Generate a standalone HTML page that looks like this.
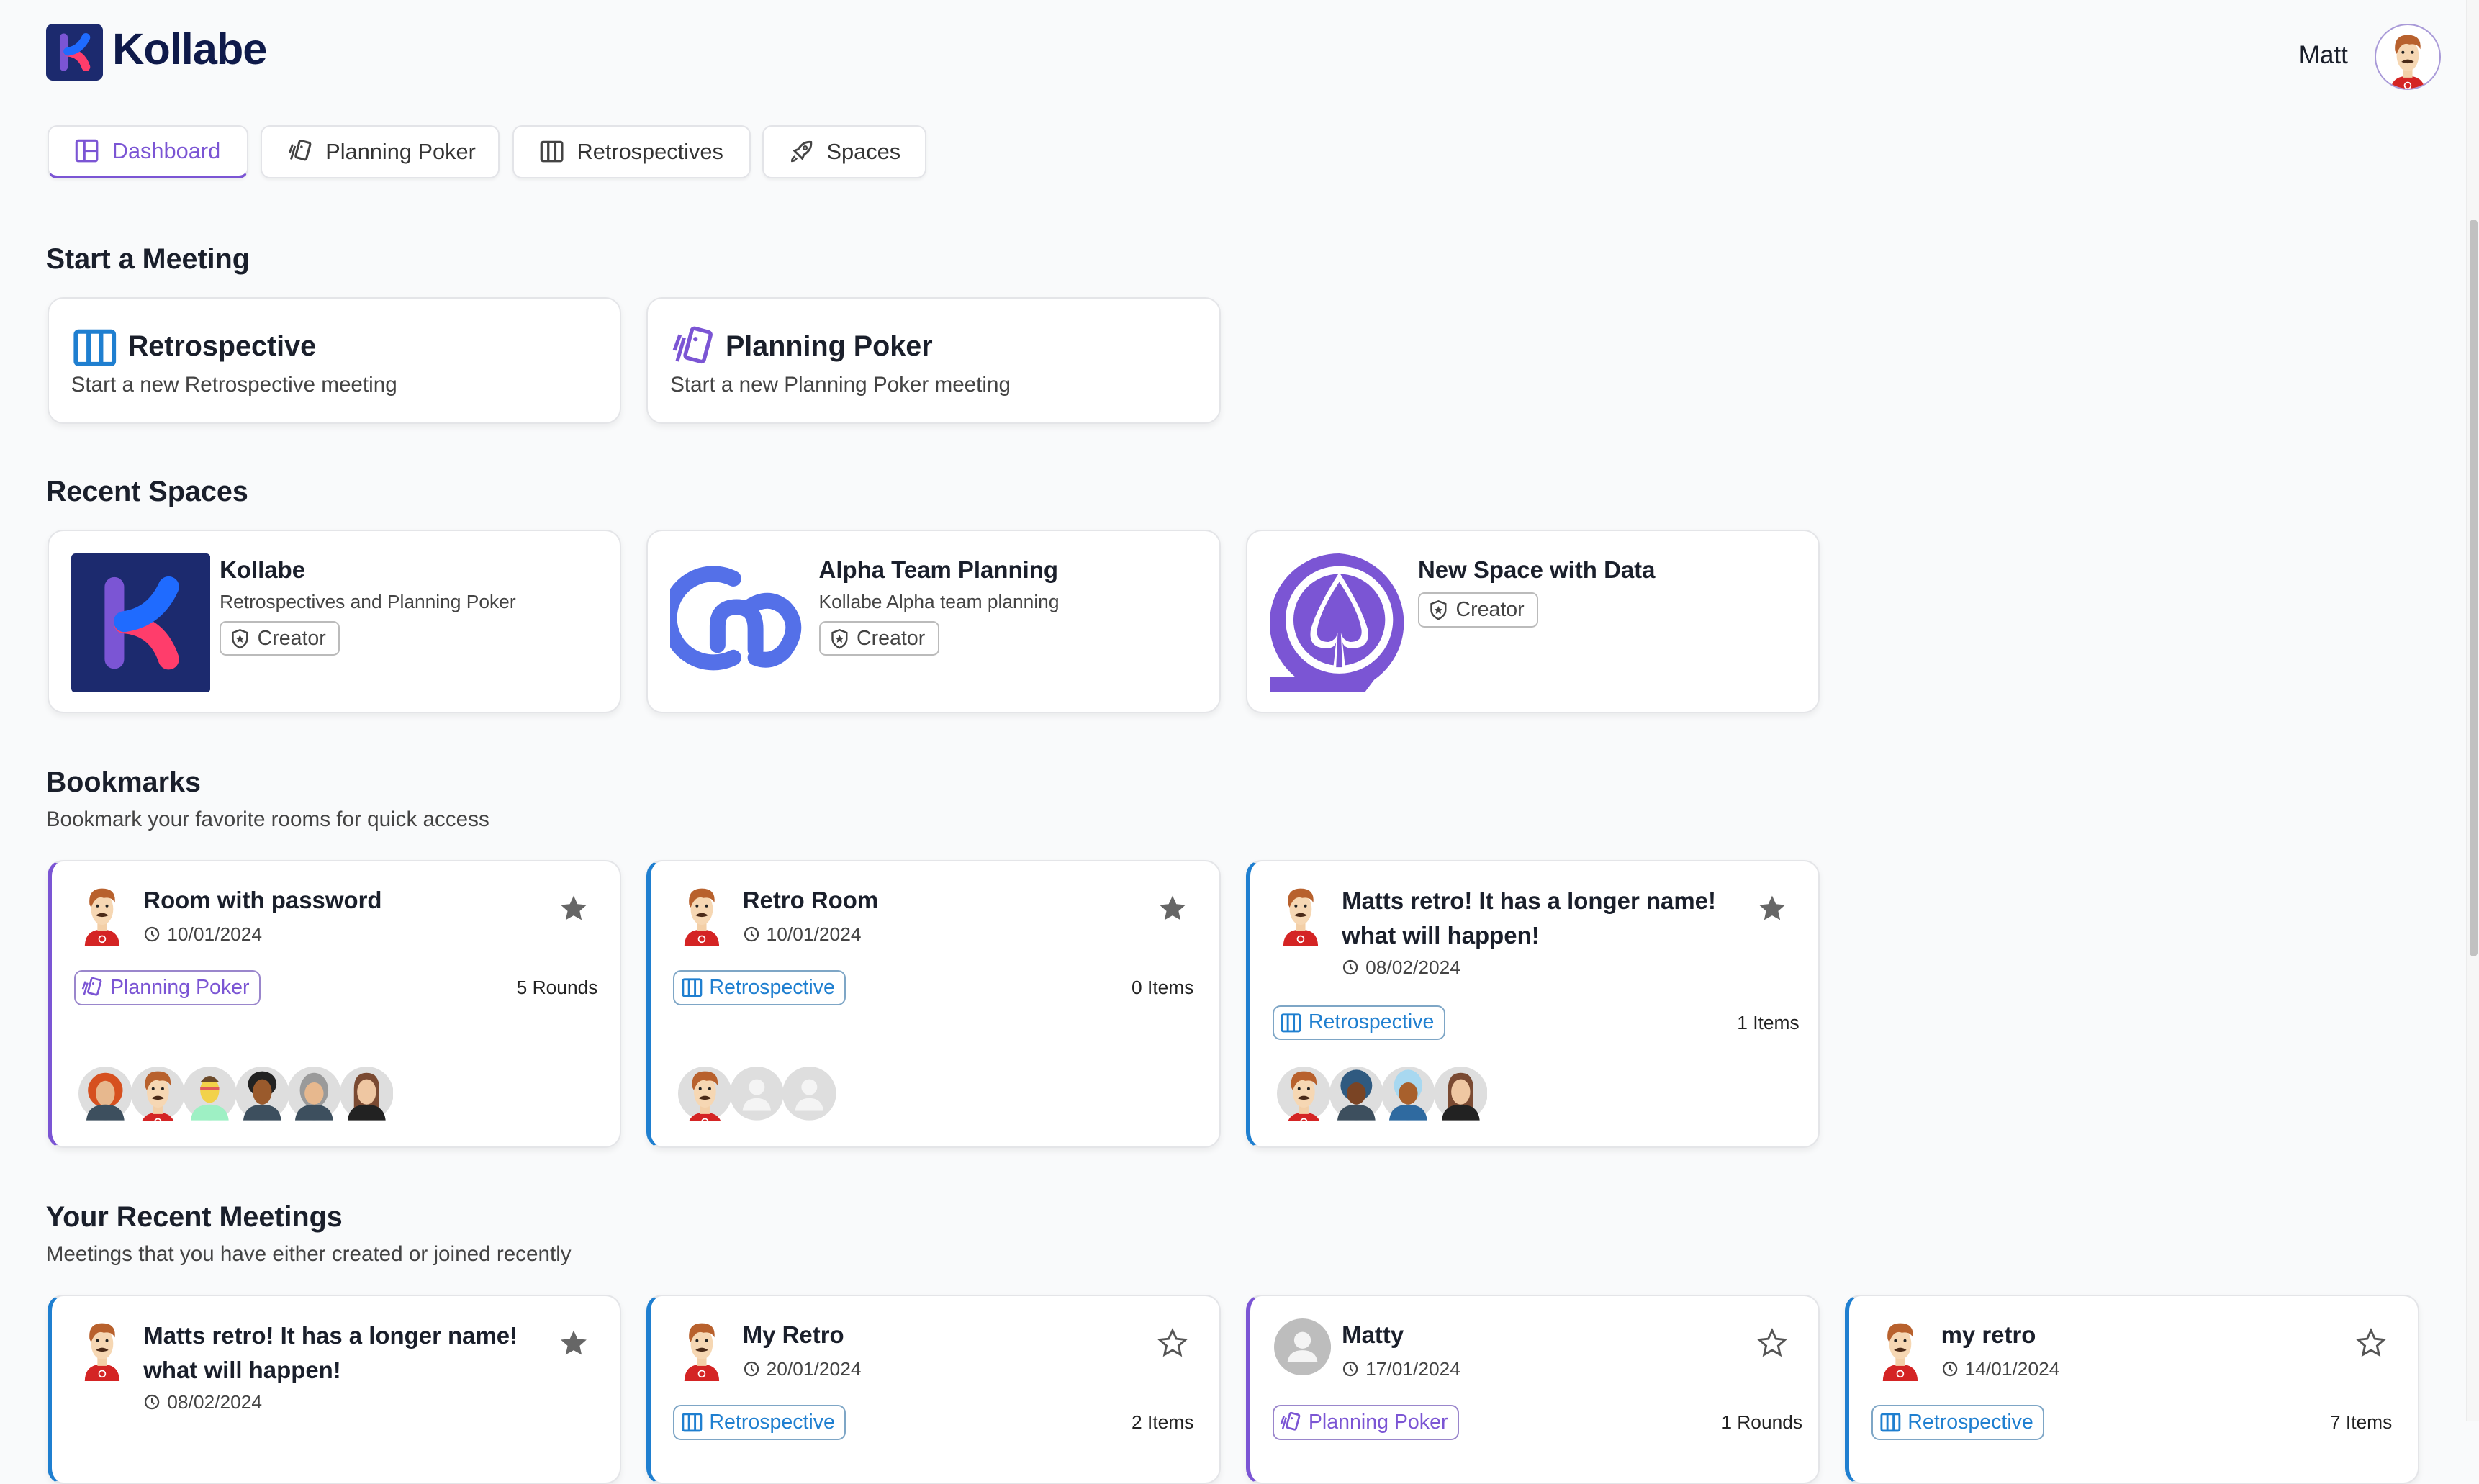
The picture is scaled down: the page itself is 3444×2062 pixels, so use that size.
<!DOCTYPE html>
<html><head><meta charset="utf-8">
<style>
html,body{margin:0;padding:0}
body{width:1568px;height:899px;overflow:hidden;background:#f9fafb;font-family:"Liberation Sans",sans-serif;color:#1a1f2b;zoom:2.19643;position:relative}
.a{position:absolute}
.tab{position:absolute;top:79px;height:34px;border:1px solid #e3e4e8;border-radius:6px;background:#fff;box-sizing:border-box;display:flex;align-items:center;font-size:14px;color:#333;box-shadow:0 1px 2px rgba(0,0,0,.05)}
.tab svg{margin:0 8px 0 16px}
h2{position:absolute;margin:0;font-size:18px;font-weight:bold;color:#1a1f2b;left:29px}
.sub{position:absolute;left:29px;font-size:13.5px;color:#444}
.card{position:absolute;background:#fff;border:1px solid #e4e5e8;border-radius:10px;box-sizing:border-box;box-shadow:0 2px 4px rgba(0,0,0,.06);overflow:hidden}
.t{position:absolute;font-weight:bold;font-size:15px;color:#1a1f2b}
.s{position:absolute;font-size:12px;color:#444}
.badge{position:absolute;height:22px;border:1px solid #bbb;border-radius:4px;box-sizing:border-box;display:flex;align-items:center;font-size:13px;color:#444;padding:0 8px 0 5px}
.badge svg{margin-right:4px}
.card.bk{border-left-width:3px;border-left-style:solid}
.card.pp{border-left-color:#7b55d4}.card.rt{border-left-color:#1f7fd0}
.tag{position:absolute;height:22px;border:1px solid;border-radius:5px;box-sizing:border-box;display:flex;align-items:center;font-size:13px;padding:0 6px 0 4px}
.tag svg{margin-right:4px}
.tp{color:#7b55d4;border-color:#9a86cc}.tr{color:#1f7fd0;border-color:#7ea6c6}
.date{position:absolute;font-size:12px;color:#444;display:flex;align-items:center}
.date svg{margin-right:4px}
.cnt{position:absolute;font-size:12px;color:#222}
.star{position:absolute}
.av{position:absolute;width:34px;height:34px}
</style></head><body>
<svg width="0" height="0" style="position:absolute">
<defs>
<symbol id="matt" viewBox="0 0 30 40">
<path d="M4 40 Q4 29 15 29 Q26 29 26 40Z" fill="#d42424"/>
<rect x="12" y="24" width="6" height="6" fill="#f3cfa7"/>
<ellipse cx="15" cy="16" rx="7" ry="10" fill="#f6d7b3"/>
<path d="M7 13 Q6 3 15 3 Q24 3 23 12 Q21 8 16 9 Q11 7 8 15Z" fill="#b8612d"/>
<path d="M11 20 Q15 17 19 20 Q15 22 11 20Z" fill="#4a2a18"/>
<circle cx="12" cy="14" r="0.9" fill="#222"/><circle cx="18" cy="14" r="0.9" fill="#222"/>
<circle cx="15" cy="35" r="2" fill="none" stroke="#fff" stroke-width="0.8"/>
</symbol>
<symbol id="st" viewBox="0 0 24 24"><path d="M12 2l2.9 6.3 6.9.7-5.2 4.6 1.5 6.8L12 17l-6.1 3.4 1.5-6.8L2.2 9l6.9-.7z"/></symbol>
<symbol id="clk" viewBox="0 0 12 12"><circle cx="6" cy="6" r="4.5" fill="none" stroke="#444" stroke-width="1.1"/><path d="M6 3.5V6l1.6 1.4" fill="none" stroke="#444" stroke-width="1.1"/></symbol>
<symbol id="retro" viewBox="0 0 16 16"><rect x="1.5" y="2" width="13" height="12" rx="1" fill="none" stroke="currentColor" stroke-width="1.5"/><path d="M5.8 2v12M10.2 2v12" stroke="currentColor" stroke-width="1.5"/></symbol>
<symbol id="poker" viewBox="0 0 16 16"><rect x="6" y="1.5" width="7" height="11" rx="1" transform="rotate(15 9 7)" fill="none" stroke="currentColor" stroke-width="1.4"/><path d="M4.5 4.5L2 13M3 3.5L1 9" stroke="currentColor" stroke-width="1.3" fill="none"/><circle cx="8.6" cy="5" r=".8" fill="currentColor"/></symbol>
<symbol id="shield" viewBox="0 0 14 14"><path d="M7 1.5L11.5 3.2V7Q11.5 10.8 7 12.8Q2.5 10.8 2.5 7V3.2Z" fill="none" stroke="#444" stroke-width="1.1"/><path d="M7 4.6l.8 1.7 1.8.2-1.3 1.2.4 1.8L7 8.6l-1.7.9.4-1.8-1.3-1.2 1.8-.2z" fill="#444"/></symbol>
</defs></svg>

<!-- header -->
<svg class="a" style="left:29px;top:15px" width="36" height="36" viewBox="0 0 100 100"><rect width="100" height="100" rx="12" fill="#1c2a6e"/><path d="M31 24V76" stroke="#7b55d4" stroke-width="14" stroke-linecap="round"/><path d="M38 50Q62 52 70 76" stroke="#ff3d6b" stroke-width="15" fill="none" stroke-linecap="round"/><path d="M38 49Q60 46 70 24" stroke="#1f6bff" stroke-width="15" fill="none" stroke-linecap="round"/></svg>
<div class="a" style="left:71px;top:15px;font-size:28px;font-weight:bold;color:#0f1a4a;letter-spacing:-.5px">Kollabe</div>
<div class="a" style="left:1454px;top:26px;font-size:16px;color:#1a1f2b">Matt</div>
<div class="a" style="left:1502px;top:15px;width:40px;height:40px;border-radius:50%;border:1px solid #a99ad8;background:#fff;overflow:hidden"><svg width="30" height="40" style="margin-left:5px;margin-top:3px"><use href="#matt"/></svg></div>

<!-- tabs -->
<div class="tab" style="left:30px;width:127px;color:#7b55d4;border-bottom:2px solid #7b55d4"><svg width="16" height="16" viewBox="0 0 16 16"><rect x="1.5" y="1.5" width="13" height="13" rx="1" fill="none" stroke="#7b55d4" stroke-width="1.4"/><path d="M6.5 1.5v13M6.5 8h8" stroke="#7b55d4" stroke-width="1.4"/></svg>Dashboard</div>
<div class="tab" style="left:165px;width:151px"><svg width="16" height="16" style="color:#444"><use href="#poker"/></svg>Planning Poker</div>
<div class="tab" style="left:324px;width:151px"><svg width="16" height="16" style="color:#444"><use href="#retro"/></svg>Retrospectives</div>
<div class="tab" style="left:482px;width:104px"><svg width="16" height="16" viewBox="0 0 16 16"><path d="M6 10L3.5 7.5 6 6.5Q9 1.5 14 2Q14.5 7 9.5 10L8.5 12.5Z" fill="none" stroke="#444" stroke-width="1.3"/><circle cx="10.3" cy="5.7" r="1.1" fill="none" stroke="#444"/><path d="M4 11Q2 12 2 14Q4 14 5 12" fill="none" stroke="#444" stroke-width="1.2"/></svg>Spaces</div>

<!-- start meeting -->
<h2 style="top:154px">Start a Meeting</h2>
<div class="card" style="left:30px;top:188px;width:363px;height:80px">
<svg class="a" style="left:15px;top:19px;color:#1f7fd0" width="28" height="24" viewBox="0 0 16 14"><rect x="1" y="1" width="14" height="12" rx="1" fill="none" stroke="currentColor" stroke-width="1.6"/><path d="M5.7 1v12M10.3 1v12" stroke="currentColor" stroke-width="1.6"/></svg>
<div class="a" style="left:50px;top:20px;font-size:18px;font-weight:bold">Retrospective</div>
<div class="a" style="left:14px;top:47px;font-size:13.5px;color:#444">Start a new Retrospective meeting</div></div>
<div class="card" style="left:409px;top:188px;width:363px;height:80px">
<svg class="a" style="left:14px;top:17px;color:#7b55d4" width="30" height="28"><use href="#poker"/></svg>
<div class="a" style="left:49px;top:20px;font-size:18px;font-weight:bold">Planning Poker</div>
<div class="a" style="left:14px;top:47px;font-size:13.5px;color:#444">Start a new Planning Poker meeting</div></div>

<!-- recent spaces -->
<h2 style="top:301px">Recent Spaces</h2>
<div class="card" style="left:30px;top:335px;width:363px;height:116px">
<svg class="a" style="left:14px;top:14px" width="88" height="88" viewBox="0 0 100 100"><rect width="100" height="100" rx="3" fill="#1c2a6e"/><path d="M31 24V76" stroke="#7b55d4" stroke-width="14" stroke-linecap="round"/><path d="M38 50Q62 52 70 76" stroke="#ff3d6b" stroke-width="15" fill="none" stroke-linecap="round"/><path d="M38 49Q60 46 70 24" stroke="#1f6bff" stroke-width="15" fill="none" stroke-linecap="round"/></svg>
<div class="t" style="left:108px;top:16px">Kollabe</div><div class="s" style="left:108px;top:38px">Retrospectives and Planning Poker</div>
<div class="badge" style="left:108px;top:57px"><svg width="14" height="14"><use href="#shield"/></svg>Creator</div></div>
<div class="card" style="left:409px;top:335px;width:363px;height:116px">
<svg class="a" style="left:14px;top:20px" width="90" height="72" viewBox="0 0 90 72"><path d="M40 10A28 28 0 1 0 40 60" fill="none" stroke="#5470e8" stroke-width="10" stroke-linecap="round"/><path d="M30 52V40Q30 28 42 28Q54 28 54 42V55" fill="none" stroke="#5470e8" stroke-width="10" stroke-linecap="round"/><path d="M50 28Q62 20 72 28Q84 40 72 56Q64 64 54 60" fill="none" stroke="#5470e8" stroke-width="10" stroke-linecap="round"/></svg>
<div class="t" style="left:108px;top:16px">Alpha Team Planning</div><div class="s" style="left:108px;top:38px">Kollabe Alpha team planning</div>
<div class="badge" style="left:108px;top:57px"><svg width="14" height="14"><use href="#shield"/></svg>Creator</div></div>
<div class="card" style="left:788px;top:335px;width:363px;height:116px">
<svg class="a" style="left:14px;top:14px" width="88" height="88" viewBox="0 0 88 88"><path d="M44 0A44 44 0 0 0 16 78H0V88H60L66 80A44 44 0 0 0 44 0Z" fill="#7b55d4"/><circle cx="44" cy="42" r="34" fill="#fff"/><circle cx="44" cy="42" r="29" fill="#7b55d4"/><path d="M44 12Q30 34 26 48Q24 60 36 60Q41 60 42 56L40 74H48L46 56Q47 60 52 60Q64 60 62 48Q58 34 44 12Z" fill="#fff"/><path d="M44 18Q32 36 30 48Q29 56 37 56Q42 55 43 50L42 72H46L45 50Q46 55 51 56Q59 56 58 48Q56 36 44 18Z" fill="#7b55d4"/></svg>
<div class="t" style="left:108px;top:16px">New Space with Data</div>
<div class="badge" style="left:108px;top:39px"><svg width="14" height="14"><use href="#shield"/></svg>Creator</div></div>

<!-- bookmarks -->
<h2 style="top:485px">Bookmarks</h2>
<div class="sub" style="top:511px">Bookmark your favorite rooms for quick access</div>

<div class="card bk pp" style="left:30px;top:544px;width:363px;height:182px">
<svg class="a" style="left:17px;top:14px" width="30" height="40"><use href="#matt"/></svg>
<div class="t" style="left:58px;top:16px">Room with password</div>
<div class="date" style="left:58px;top:39px"><svg width="11" height="11"><use href="#clk"/></svg>10/01/2024</div>
<svg class="star" style="left:320px;top:20px" width="20" height="20" fill="#666"><use href="#st"/></svg>
<div class="tag tp" style="left:14px;top:69px"><svg width="14" height="14"><use href="#poker"/></svg>Planning Poker</div>
<div class="cnt" style="left:294px;top:73px">5 Rounds</div>
<svg class="av" style="left:17px;top:130px" viewBox="0 0 34 34"><circle cx="17" cy="17" r="17" fill="#dedede"/><ellipse cx="17" cy="15" rx="11" ry="11" fill="#d6501f"/><ellipse cx="17" cy="17" rx="6" ry="8" fill="#e7b88e"/><path d="M5 34Q6 24 17 24Q28 24 29 34Z" fill="#3d4f5e"/></svg>
<svg class="av" style="left:50px;top:130px" viewBox="0 0 34 34"><circle cx="17" cy="17" r="17" fill="#dedede"/><svg x="2" y="0" width="30" height="40"><use href="#matt"/></svg></svg>
<svg class="av" style="left:83px;top:130px" viewBox="0 0 34 34"><circle cx="17" cy="17" r="17" fill="#dedede"/><path d="M5 34Q6 24 17 24Q28 24 29 34Z" fill="#9ef0c4"/><ellipse cx="17" cy="15" rx="6" ry="8" fill="#f2d24a"/><path d="M11 10Q17 2 23 10Z" fill="#6b4a2a"/><path d="M11 14h12" stroke="#e05a5a" stroke-width="2"/></svg>
<svg class="av" style="left:116px;top:130px" viewBox="0 0 34 34"><circle cx="17" cy="17" r="17" fill="#dedede"/><path d="M5 34Q6 24 17 24Q28 24 29 34Z" fill="#3d4f5e"/><ellipse cx="17" cy="11" rx="9" ry="8" fill="#222"/><ellipse cx="17" cy="16" rx="6" ry="8" fill="#9a5a2c"/></svg>
<svg class="av" style="left:149px;top:130px" viewBox="0 0 34 34"><circle cx="17" cy="17" r="17" fill="#dedede"/><ellipse cx="17" cy="15" rx="9" ry="11" fill="#9a9a9a"/><path d="M5 34Q6 24 17 24Q28 24 29 34Z" fill="#3d4f5e"/><ellipse cx="17" cy="17" rx="6" ry="7" fill="#e7b88e"/></svg>
<svg class="av" style="left:182px;top:130px" viewBox="0 0 34 34"><circle cx="17" cy="17" r="17" fill="#dedede"/><path d="M9 28V14Q9 4 17 4Q25 4 25 14V28Z" fill="#7a4a32"/><path d="M5 34Q6 24 17 24Q28 24 29 34Z" fill="#222"/><ellipse cx="17" cy="16" rx="6" ry="8" fill="#efc7a2"/></svg>
</div>

<div class="card bk rt" style="left:409px;top:544px;width:363px;height:182px">
<svg class="a" style="left:17px;top:14px" width="30" height="40"><use href="#matt"/></svg>
<div class="t" style="left:58px;top:16px">Retro Room</div>
<div class="date" style="left:58px;top:39px"><svg width="11" height="11"><use href="#clk"/></svg>10/01/2024</div>
<svg class="star" style="left:320px;top:20px" width="20" height="20" fill="#666"><use href="#st"/></svg>
<div class="tag tr" style="left:14px;top:69px"><svg width="14" height="14"><use href="#retro"/></svg>Retrospective</div>
<div class="cnt" style="left:304px;top:73px">0 Items</div>
<svg class="av" style="left:17px;top:130px" viewBox="0 0 34 34"><circle cx="17" cy="17" r="17" fill="#dedede"/><svg x="2" y="0" width="30" height="40"><use href="#matt"/></svg></svg>
<svg class="av" style="left:50px;top:130px" viewBox="0 0 34 34"><circle cx="17" cy="17" r="17" fill="#dedede"/><circle cx="17" cy="13" r="5" fill="#f4f4f4"/><path d="M8 28Q9 20 17 20Q25 20 26 28Z" fill="#f4f4f4"/></svg>
<svg class="av" style="left:83px;top:130px" viewBox="0 0 34 34"><circle cx="17" cy="17" r="17" fill="#dedede"/><circle cx="17" cy="13" r="5" fill="#f4f4f4"/><path d="M8 28Q9 20 17 20Q25 20 26 28Z" fill="#f4f4f4"/></svg>
</div>

<div class="card bk rt" style="left:788px;top:544px;width:363px;height:182px">
<svg class="a" style="left:17px;top:14px" width="30" height="40"><use href="#matt"/></svg>
<div class="t" style="left:58px;top:14px;line-height:22px;width:260px">Matts retro! It has a longer name! what will happen!</div>
<div class="date" style="left:58px;top:60px"><svg width="11" height="11"><use href="#clk"/></svg>08/02/2024</div>
<svg class="star" style="left:320px;top:20px" width="20" height="20" fill="#666"><use href="#st"/></svg>
<div class="tag tr" style="left:14px;top:91px"><svg width="14" height="14"><use href="#retro"/></svg>Retrospective</div>
<div class="cnt" style="left:308px;top:95px">1 Items</div>
<svg class="av" style="left:17px;top:130px" viewBox="0 0 34 34"><circle cx="17" cy="17" r="17" fill="#dedede"/><svg x="2" y="0" width="30" height="40"><use href="#matt"/></svg></svg>
<svg class="av" style="left:50px;top:130px" viewBox="0 0 34 34"><circle cx="17" cy="17" r="17" fill="#dedede"/><ellipse cx="17" cy="12" rx="10" ry="10" fill="#2f5a80"/><path d="M5 34Q6 24 17 24Q28 24 29 34Z" fill="#3d4f5e"/><ellipse cx="17" cy="17" rx="6" ry="7" fill="#7a4424"/></svg>
<svg class="av" style="left:83px;top:130px" viewBox="0 0 34 34"><circle cx="17" cy="17" r="17" fill="#dedede"/><ellipse cx="17" cy="12" rx="9" ry="10" fill="#a8d8f0"/><path d="M5 34Q6 24 17 24Q28 24 29 34Z" fill="#2f6aa0"/><ellipse cx="17" cy="17" rx="6" ry="7" fill="#a8602c"/></svg>
<svg class="av" style="left:116px;top:130px" viewBox="0 0 34 34"><circle cx="17" cy="17" r="17" fill="#dedede"/><path d="M9 28V14Q9 4 17 4Q25 4 25 14V28Z" fill="#7a4a32"/><path d="M5 34Q6 24 17 24Q28 24 29 34Z" fill="#222"/><ellipse cx="17" cy="16" rx="6" ry="8" fill="#efc7a2"/></svg>
</div>

<!-- recent meetings -->
<h2 style="top:760px">Your Recent Meetings</h2>
<div class="sub" style="top:786px">Meetings that you have either created or joined recently</div>

<div class="card bk rt" style="left:30px;top:819px;width:363px;height:120px">
<svg class="a" style="left:17px;top:14px" width="30" height="40"><use href="#matt"/></svg>
<div class="t" style="left:58px;top:14px;line-height:22px;width:260px">Matts retro! It has a longer name! what will happen!</div>
<div class="date" style="left:58px;top:60px"><svg width="11" height="11"><use href="#clk"/></svg>08/02/2024</div>
<svg class="star" style="left:320px;top:20px" width="20" height="20" fill="#666"><use href="#st"/></svg>
</div>
<div class="card bk rt" style="left:409px;top:819px;width:363px;height:120px">
<svg class="a" style="left:17px;top:14px" width="30" height="40"><use href="#matt"/></svg>
<div class="t" style="left:58px;top:16px">My Retro</div>
<div class="date" style="left:58px;top:39px"><svg width="11" height="11"><use href="#clk"/></svg>20/01/2024</div>
<svg class="star" style="left:320px;top:20px" width="20" height="20" fill="none" stroke="#555" stroke-width="1.6"><use href="#st"/></svg>
<div class="tag tr" style="left:14px;top:69px"><svg width="14" height="14"><use href="#retro"/></svg>Retrospective</div>
<div class="cnt" style="left:304px;top:73px">2 Items</div>
</div>
<div class="card bk pp" style="left:788px;top:819px;width:363px;height:120px">
<svg class="a" style="left:15px;top:14px" width="36" height="36" viewBox="0 0 34 34"><circle cx="17" cy="17" r="17" fill="#bdbdbd"/><circle cx="17" cy="13" r="5" fill="#f4f4f4"/><path d="M8 26Q9 19 17 19Q25 19 26 26Z" fill="#f4f4f4"/></svg>
<div class="t" style="left:58px;top:16px">Matty</div>
<div class="date" style="left:58px;top:39px"><svg width="11" height="11"><use href="#clk"/></svg>17/01/2024</div>
<svg class="star" style="left:320px;top:20px" width="20" height="20" fill="none" stroke="#555" stroke-width="1.6"><use href="#st"/></svg>
<div class="tag tp" style="left:14px;top:69px"><svg width="14" height="14"><use href="#poker"/></svg>Planning Poker</div>
<div class="cnt" style="left:298px;top:73px">1 Rounds</div>
</div>
<div class="card bk rt" style="left:1167px;top:819px;width:363px;height:120px">
<svg class="a" style="left:17px;top:14px" width="30" height="40"><use href="#matt"/></svg>
<div class="t" style="left:58px;top:16px">my retro</div>
<div class="date" style="left:58px;top:39px"><svg width="11" height="11"><use href="#clk"/></svg>14/01/2024</div>
<svg class="star" style="left:320px;top:20px" width="20" height="20" fill="none" stroke="#555" stroke-width="1.6"><use href="#st"/></svg>
<div class="tag tr" style="left:14px;top:69px"><svg width="14" height="14"><use href="#retro"/></svg>Retrospective</div>
<div class="cnt" style="left:304px;top:73px">7 Items</div>
</div>

<!-- scrollbar -->
<div class="a" style="left:1560px;top:0;width:8px;height:899px;background:#f6f6f6;border-left:1px solid #ececec"></div>
<div class="a" style="left:1562px;top:139px;width:5px;height:466px;background:#c1c1c1;border-radius:3px"></div>
</body></html>
